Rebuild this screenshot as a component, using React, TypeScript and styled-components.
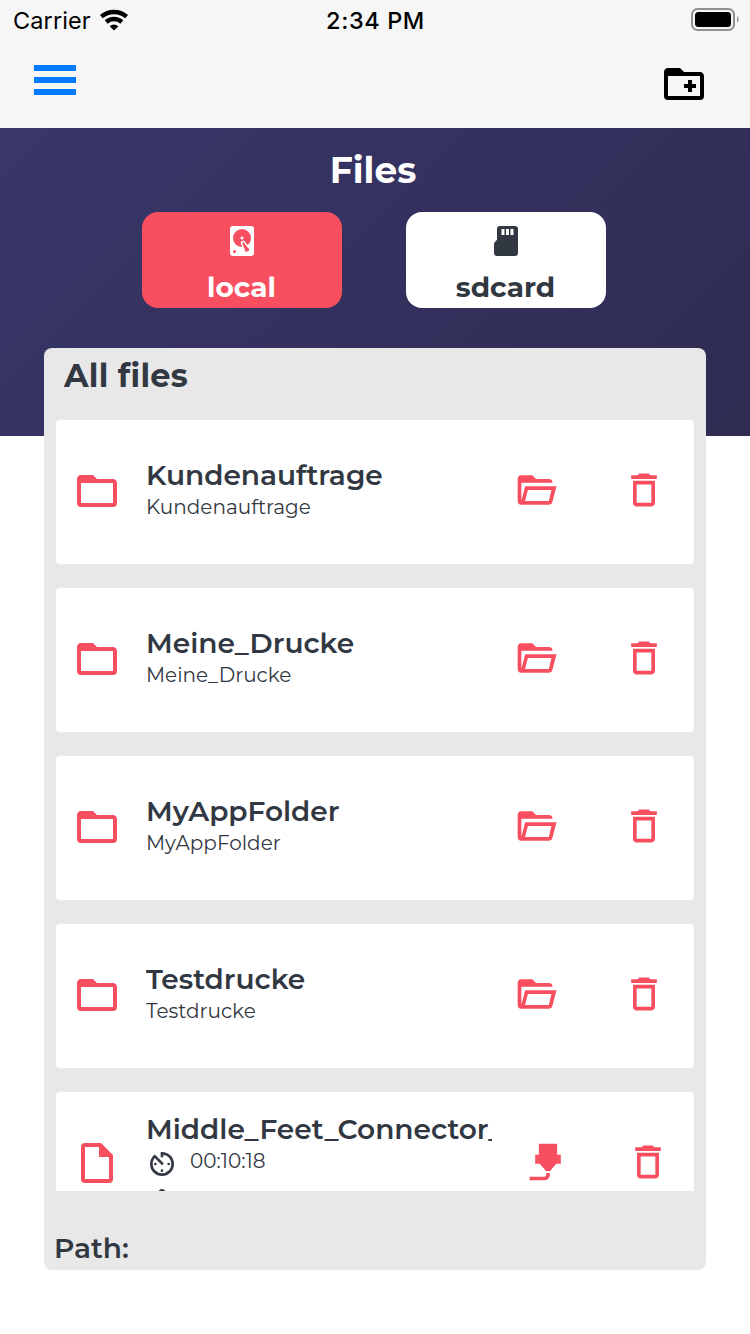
import React from "react";
import styled, { createGlobalStyle } from "styled-components";

const INK = "#323842";
const RED = "#f84f60";

const GlobalStyle = createGlobalStyle`
  * { box-sizing: border-box; }
  body { margin: 0; background: #fff; overflow: hidden; }
`;

const Screen = styled.div`
  width: 750px;
  height: 1334px;
  overflow: hidden;
  background: #fff;
  color: ${INK};
  font-family: Montserrat, Inter, sans-serif;
`;

const TopBar = styled.header`
  height: 128px;
  background: #f6f6f6;
  color: #000;
`;

const StatusBar = styled.div`
  display: grid;
  grid-template-columns: 1fr auto 1fr;
  align-items: center;
  height: 40px;
  padding: 0 12px 0 13px;
  font-family: Inter, sans-serif;
  font-size: 23.5px;
`;

const Carrier = styled.div`
  display: flex;
  align-items: center;
  gap: 8px;
  line-height: 38px;
  letter-spacing: 0.1px;
`;

const CarrierName = styled.span`
  padding-top: 2px;
`;

const Clock = styled.div`
  font-weight: 500;
  letter-spacing: 0.6px;
`;

const Battery = styled.svg`
  justify-self: end;
  margin-right: -2px;
`;

const NavBar = styled.div`
  display: flex;
  justify-content: space-between;
  padding: 20px 42px 0 34px;
`;

const MenuButton = styled.div`
  display: flex;
  flex-direction: column;
  gap: 6px;
  width: 42px;
  padding-top: 5px;
`;

const MenuLine = styled.span`
  height: 6px;
  background: #007aff;
`;

const Hero = styled.section`
  height: 308px;
  padding-top: 20px;
  background: linear-gradient(135deg, #383768 0%, #34315f 50%, #2e2c51 100%);
`;

const PageTitle = styled.h1`
  margin: 0 0 20px;
  padding-right: 4px;
  color: #fff;
  font-size: 36px;
  font-weight: 700;
  line-height: 44px;
  text-align: center;
`;

const Tabs = styled.div`
  display: flex;
  justify-content: center;
  gap: 64px;
  padding-right: 2px;
`;

const Tab = styled.div<{ $active?: boolean }>`
  display: flex;
  flex-direction: column;
  align-items: center;
  width: 200px;
  height: 96px;
  padding-top: 11px;
  border-radius: 16px;
  background: ${(p) => (p.$active ? RED : "#fff")};
  color: ${(p) => (p.$active ? "#fff" : INK)};
  font-size: 28px;
  font-weight: 700;
  line-height: 34px;
`;

const TabLabel = styled.div`
  margin-top: 11px;
  padding-right: 1px;
`;

const Panel = styled.main`
  display: flex;
  flex-direction: column;
  height: 922px;
  margin: -88px 44px 0;
  padding: 0 12px;
  border-radius: 8px;
  background: #e8e8e8;
`;

const PanelTitle = styled.h2`
  height: 72px;
  margin: 0;
  padding: 8px 0 0 8px;
  font-size: 32px;
  font-weight: 700;
  line-height: 40px;
  letter-spacing: 0.25px;
`;

const FileList = styled.div`
  display: flex;
  flex-direction: column;
  gap: 24px;
  height: 771px;
  overflow: hidden;
`;

const Card = styled.article`
  display: flex;
  flex: none;
  align-items: center;
  height: 144px;
  padding: 0 0 2px 17px;
  border-radius: 4px;
  background: #fff;
`;

const Info = styled.div<{ $top: number }>`
  align-self: flex-start;
  width: 346px;
  margin-left: 25px;
  padding-top: ${(p) => p.$top}px;
  overflow: hidden;
`;

const FileName = styled.div`
  margin-bottom: 1px;
  font-size: 28px;
  font-weight: 600;
  line-height: 34px;
  white-space: nowrap;
`;

const Detail = styled.div`
  font-size: 20px;
  font-weight: 400;
  line-height: 28px;
`;

const Meta = styled.div`
  display: flex;
  align-items: flex-start;
  gap: 12px;
  height: 37px;
  margin-top: 2px;
`;

const MetaText = styled(Detail)`
  margin-top: -1px;
`;

const Actions = styled.div<{ $start: number; $gap: number }>`
  display: flex;
  gap: ${(p) => p.$gap}px;
  margin-left: ${(p) => p.$start}px;
  padding-bottom: 2px;
`;

const PathLabel = styled.div`
  margin: 40px 0 0 -2px;
  font-size: 28px;
  font-weight: 600;
  line-height: 34px;
`;

const Glyph = styled.svg<{ $color?: string }>`
  display: block;
  flex: none;
  fill: ${(p) => p.$color ?? RED};
`;

const paths = {
  folder:
    "M20 18H4V8H20M20 6H12L10 4H4C2.89 4 2 4.89 2 6V18A2 2 0 0 0 4 20H20A2 2 0 0 0 22 18V8C22 6.89 21.1 6 20 6Z",
  folderAdd:
    "M20 18H4V8H20M20 6H12L10 4H4C2.89 4 2 4.89 2 6V18A2 2 0 0 0 4 20H20A2 2 0 0 0 22 18V8C22 6.89 21.1 6 20 6ZM14 10h2v2h2v2h-2v2h-2v-2h-2v-2h2z",
  folderOpen:
    "M6.1 10L4 18V8H21A2 2 0 0 0 19 6H12L10 4H4A2 2 0 0 0 2 6V18A2 2 0 0 0 4 20H19C19.9 20 20.7 19.4 20.9 18.5L23.2 10H6.1M19 18H6L7.6 12H20.4L19 18Z",
  trash:
    "M6 19a2 2 0 0 0 2 2h8c1.1 0 2-.9 2-2V7H6v12M8 9h8v10H8V9m7.5-5l-1-1h-5l-1 1H5v2h14V4h-3.5z",
  file: "M13 9V4H6V20H18V9H13M6 2H14L20 8V20A2 2 0 0 1 18 22H6A2 2 0 0 1 4 20V4A2 2 0 0 1 6 2Z",
  nozzle:
    "M7 2H17V8H19V13H16.5L13 17H11L7.5 13H5V8H7V2M10 22H2V20H10A1 1 0 0 0 11 19V18H13V19A3 3 0 0 1 10 22Z",
  harddisk:
    "M6 2h12a2 2 0 0 1 2 2v16a2 2 0 0 1-2 2H6a2 2 0 0 1-2-2V4a2 2 0 0 1 2-2m6 2a6 6 0 0 0-6 6c0 3.31 2.69 6 6.1 6l-.88-2.23a1.01 1.01 0 0 1 .37-1.37l.86-.5a1.01 1.01 0 0 1 1.37.37l1.92 2.42A5.977 5.977 0 0 0 18 10a6 6 0 0 0-6-6m0 5a1 1 0 0 1 1 1 1 1 0 0 1-1 1 1 1 0 0 1-1-1 1 1 0 0 1 1-1m-5 9a1 1 0 0 0-1 1 1 1 0 0 0 1 1 1 1 0 0 0 1-1 1 1 0 0 0-1-1m5.09-4.73 2.49 6.31 2.59-1.5-4.22-5.31-.86.5z",
  sdcard:
    "M8 2A2 2 0 0 0 6 4V11.18L4.59 12.59C4.21 12.96 4 13.47 4 14V20A2 2 0 0 0 6 22H18A2 2 0 0 0 20 20V4A2 2 0 0 0 18 2H8M9 4H11V8H9V4M12 4H14V8H12V4M15 4H17V8H15V4Z",
  timer:
    "M11 17a1 1 0 0 0 2 0a1 1 0 0 0-2 0M11 3v4h2V5.08c3.39.49 6 3.39 6 6.92a7 7 0 0 1-14 0c0-1.68.59-3.22 1.58-4.42L12 13l1.41-1.41-6.8-6.8v.02C4.42 6.45 3 9.05 3 12a9 9 0 0 0 18 0a9 9 0 0 0-9-9h-1m7 9a1 1 0 0 0-2 0a1 1 0 0 0 2 0M6 12a1 1 0 0 0 2 0a1 1 0 0 0-2 0",
  diamond:
    "M12 3a2.6 2.6 0 0 1 1.8.7l6.6 6.9a2 2 0 0 1 0 2.8l-7 7a2 2 0 0 1-2.8 0l-7-7a2 2 0 0 1 0-2.8l6.6-6.9A2.6 2.6 0 0 1 12 3Z",
};

function Icon({ name, size, color }: { name: keyof typeof paths; size: number; color?: string }) {
  return (
    <Glyph width={size} height={size} viewBox="0 0 24 24" $color={color}>
      <path d={paths[name]} fillRule="evenodd" />
    </Glyph>
  );
}

const folders = ["Kundenauftrage", "Meine_Drucke", "MyAppFolder", "Testdrucke"];

export default function App() {
  return (
    <Screen>
      <GlobalStyle />
      <TopBar>
        <StatusBar>
          <Carrier>
            <CarrierName>Carrier</CarrierName>
            <svg width="32" height="22" viewBox="0 0 32 22">
              <path d="M2.4 7.6A19.4 19.4 0 0 1 27.6 7.6" fill="none" stroke="#000" strokeWidth="4.4" />
              <path d="M7.2 13A11.6 11.6 0 0 1 22.8 13" fill="none" stroke="#000" strokeWidth="4.4" />
              <path d="M10.6 17.2Q15 13.6 19.4 17.2L15 21.6Z" />
            </svg>
          </Carrier>
          <Clock>2:34 PM</Clock>
          <Battery width="50" height="24" viewBox="0 0 50 24">
            <rect x="2" y="1" width="42" height="21" rx="5.5" fill="none" stroke="#909092" strokeWidth="2" />
            <rect x="5" y="4" width="36" height="15" rx="3.5" />
            <path d="M47 8q3.4 3.5 0 7z" fill="#909092" />
          </Battery>
        </StatusBar>
        <NavBar>
          <MenuButton>
            <MenuLine />
            <MenuLine />
            <MenuLine />
          </MenuButton>
          <Icon name="folderAdd" size={48} color="#000" />
        </NavBar>
      </TopBar>

      <Hero>
        <PageTitle>Files</PageTitle>
        <Tabs>
          <Tab $active>
            <Icon name="harddisk" size={36} color="#fff" />
            <TabLabel>local</TabLabel>
          </Tab>
          <Tab>
            <Icon name="sdcard" size={36} color={INK} />
            <TabLabel>sdcard</TabLabel>
          </Tab>
        </Tabs>
      </Hero>

      <Panel>
        <PanelTitle>All files</PanelTitle>
        <FileList>
          {folders.map((name) => (
            <Card key={name}>
              <Icon name="folder" size={48} />
              <Info $top={38}>
                <FileName>{name}</FileName>
                <Detail>{name}</Detail>
              </Info>
              <Actions $start={22} $gap={64}>
                <Icon name="folderOpen" size={44} />
                <Icon name="trash" size={44} />
              </Actions>
            </Card>
          ))}
          <Card>
            <Icon name="file" size={48} />
            <Info $top={20}>
              <FileName>Middle_Feet_Connector_</FileName>
              <Meta>
                <Icon name="timer" size={32} color={INK} />
                <MetaText>00:10:18</MetaText>
              </Meta>
              <Icon name="diamond" size={32} color={INK} />
            </Info>
            <Actions $start={34} $gap={56}>
              <Icon name="nozzle" size={44} />
              <Icon name="trash" size={44} />
            </Actions>
          </Card>
        </FileList>
        <PathLabel>Path:</PathLabel>
      </Panel>
    </Screen>
  );
}
